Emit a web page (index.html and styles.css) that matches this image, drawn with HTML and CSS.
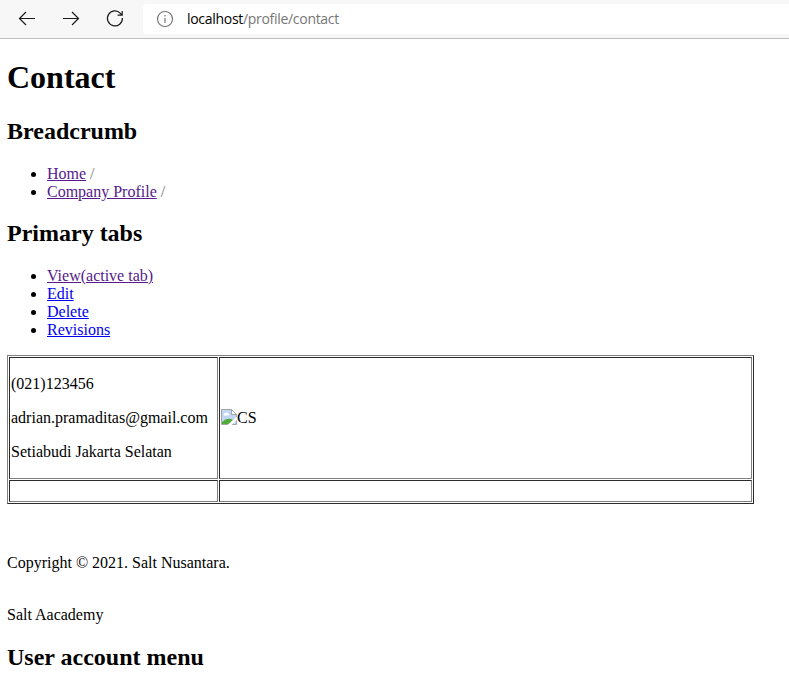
FILE: index.html
```html
<!DOCTYPE html>
<html lang="en">
<head>
<meta charset="utf-8">
<title>Contact</title>
<link rel="stylesheet" href="styles.css">
</head>
<body>
<header class="toolbar">
  <svg class="nav" viewBox="0 0 20 20"><path d="M18 9.5H2.5M9 3L2.5 9.5L9 16"/></svg>
  <svg class="nav" viewBox="0 0 20 20"><path d="M2 9.5H17.5M11 3L17.5 9.5L11 16"/></svg>
  <svg class="nav" viewBox="0 0 20 20"><path d="M17.4 9A7.5 7.5 0 1 1 15.4 4.3L16.8 5.8M17.2 2V6.2H12.6"/></svg>
  <div class="address">
    <svg class="info" viewBox="0 0 18 18"><circle cx="9" cy="9" r="7.5"/><path d="M9 8V13M9 5V6.5"/></svg>
    <span class="url">localhost<span class="path">/profile/contact</span></span>
  </div>
</header>
<main class="page">
  <h1>Contact</h1>
  <h2>Breadcrumb</h2>
  <ul>
    <li><a class="visited" href="#">Home</a> <span class="slash">/</span></li>
    <li><a class="visited" href="#">Company Profile</a> <span class="slash">/</span></li>
  </ul>
  <h2 class="tabs-title">Primary tabs</h2>
  <ul class="tabs">
    <li><a class="visited" href="#">View(active tab)</a></li>
    <li><a href="#">Edit</a></li>
    <li><a href="#">Delete</a></li>
    <li><a href="#">Revisions</a></li>
  </ul>
  <table>
    <tr>
      <td class="details">
        <p>(021)123456</p>
        <p>adrian.pramaditas@gmail.com</p>
        <p>Setiabudi Jakarta Selatan</p>
      </td>
      <td>
        <span class="missing"><svg class="broken" viewBox="0 0 16 16">
          <path d="M.5.5H10.5L15.5 5.5V15.5H.5Z" fill="#c3d6f5" stroke="#a4a4a4"/>
          <path d="M3 6.5A1.5 1.5 0 0 1 4.5 4A1.8 1.8 0 0 1 7.5 5A1 1 0 0 1 8 6.5Z" fill="#fff"/>
          <path d="M1 15V13C4 10 7 9 10 10L12 11L8 15Z" fill="#53ab3b"/>
          <path d="M10.5.5V5.5H15.5Z" fill="#fff" stroke="#a4a4a4"/>
          <path d="M16 7.5L6.5 16H10.5L16 11Z" fill="#fff"/>
        </svg>CS</span>
      </td>
    </tr>
    <tr><td>&nbsp;</td><td>&nbsp;</td></tr>
  </table>
  <p>&nbsp;</p>
  <p>Copyright © 2021. Salt Nusantara.</p>
  <p class="academy">Salt Aacademy</p>
  <h2>User account menu</h2>
</main>
</body>
</html>
```

FILE: styles.css
```css
body {
  margin: 0;
  background: #fff;
  color: #000;
  font: 16px/18px "Liberation Serif", "Times New Roman", serif;
  height: 683px;
  overflow: hidden;
}
.toolbar {
  display: flex;
  align-items: center;
  box-sizing: border-box;
  height: 39px;
  padding-left: 17px;
  gap: 24px;
  background: #f7f7f7;
  border-bottom: 1px solid #bdbdbd;
}
.nav {
  flex: none;
  width: 20px;
  height: 20px;
  fill: none;
  stroke: #1b1b1b;
  stroke-width: 1.2;
}
.address {
  flex: 1;
  display: flex;
  align-items: center;
  height: 30px;
  margin-left: -6px;
  padding-left: 13px;
  gap: 13px;
  background: #fff;
  border-radius: 4px 0 0 4px;
}
.info {
  width: 18px;
  height: 18px;
  fill: none;
  stroke: #767676;
  stroke-width: 1.2;
}
.url {
  font: 14px/18px "Open Sans", "Noto Sans", sans-serif;
  letter-spacing: -0.3px;
}
.path { color: #767676; }
.page {
  display: flow-root;
  padding: 0 7px;
}
h1 {
  margin: 20px 0 23px;
  font-size: 32px;
  line-height: 36px;
}
h2 {
  margin: 20px 0;
  font-size: 24px;
  line-height: 27px;
}
ul {
  margin: 20px 0 19px;
  padding-left: 40px;
}
.tabs-title {
  margin: 19px 0 20px;
}
.tabs {
  margin: 0 0 16px;
}
a { color: #0000ee; }
.visited { color: #551a8b; }
.slash { color: #767676; }
table {
  width: 747px;
  border: 1px solid;
  border-color: #808080 #2b2b2b #2b2b2b #808080;
  border-spacing: 1px;
}
td {
  padding: 1px;
  border: 1px solid;
  border-color: #2b2b2b #808080 #808080 #2b2b2b;
}
.details {
  width: 205px;
}
p { margin: 16px 0; }
.academy { margin-top: 34px; }
.missing {
  display: flex;
  align-items: center;
}
.broken {
  width: 16px;
  height: 16px;
  margin-bottom: 2px;
}
```
